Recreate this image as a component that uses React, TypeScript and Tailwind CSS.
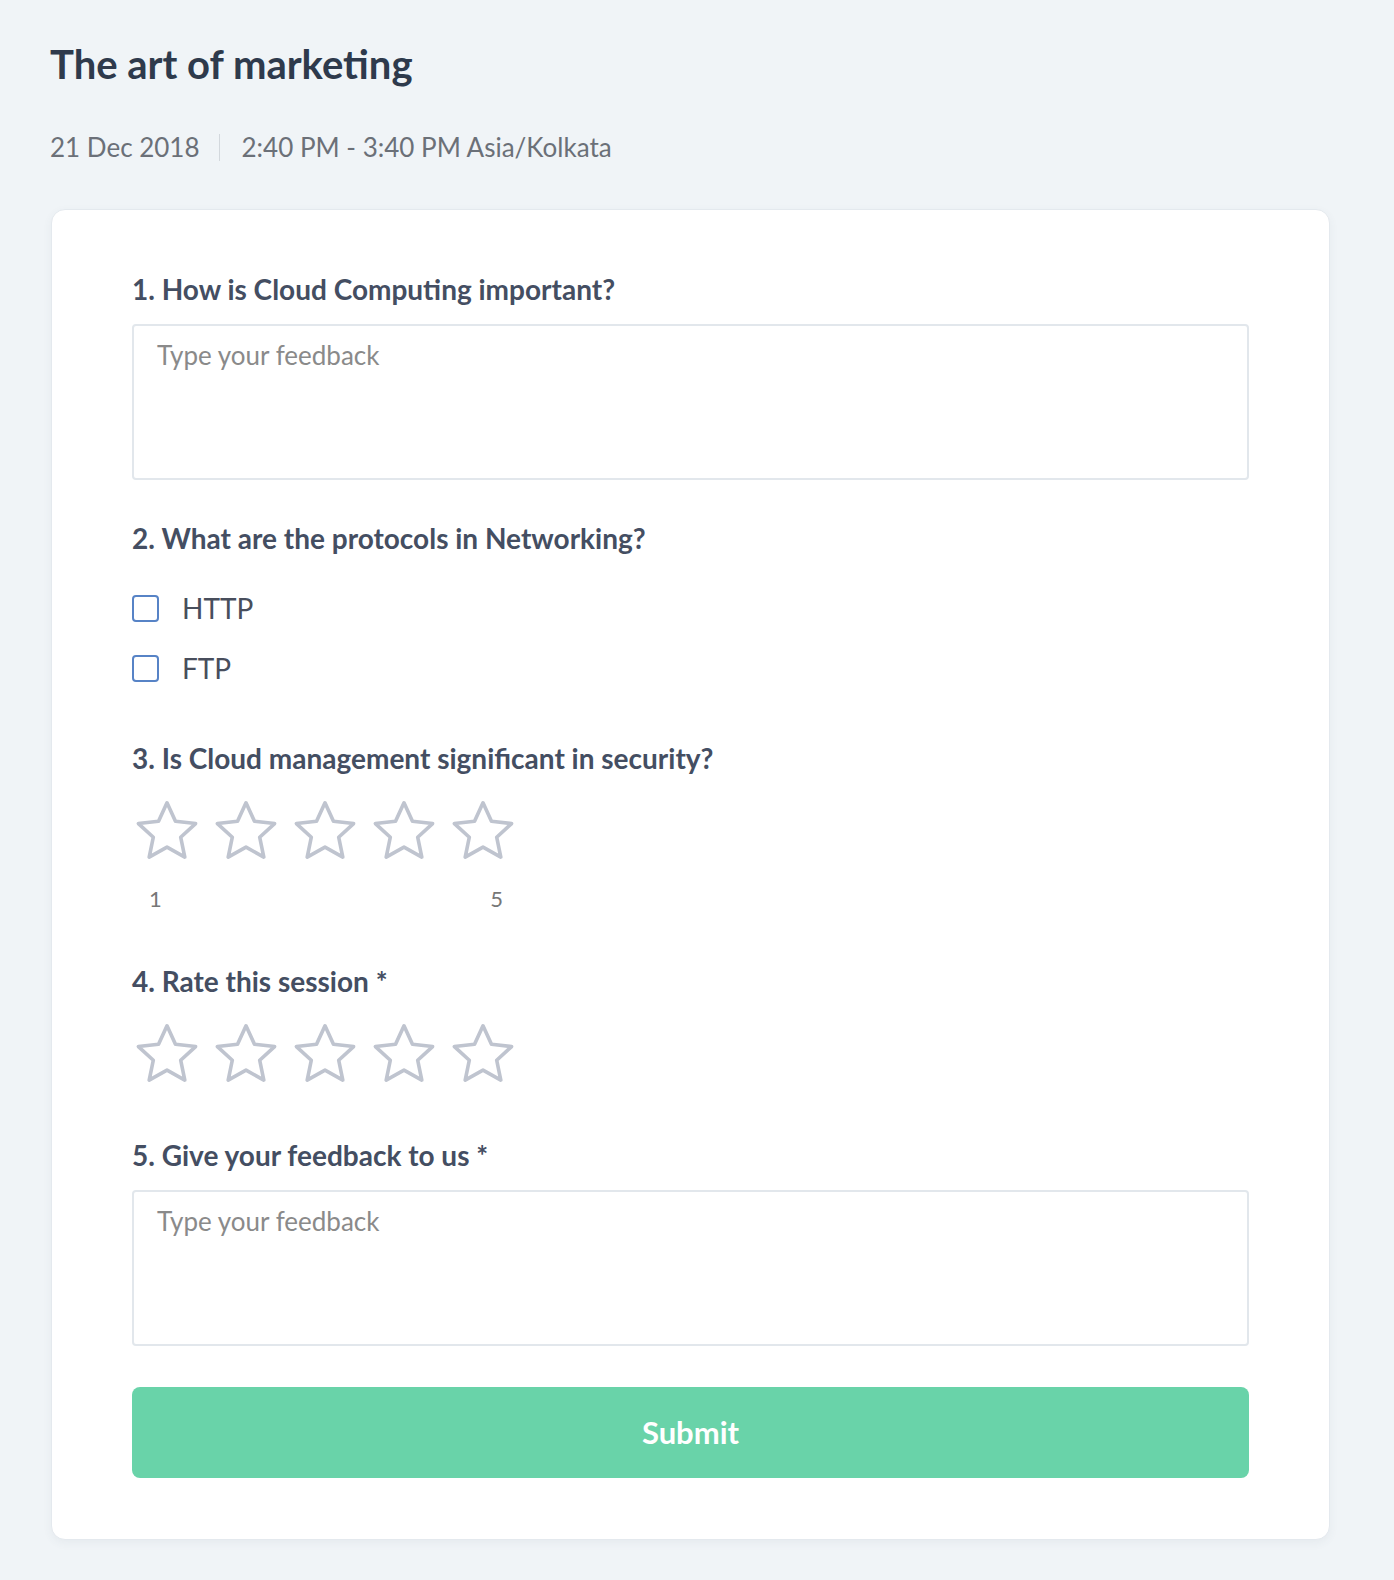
import React from 'react';

const font = { fontFamily: 'Lato, "Open Sans", "Liberation Sans", sans-serif' };

const Star = () => (
  <svg viewBox="0 0 24 24" className="w-[70px] h-[70px]" fill="none">
    <polygon
      points="12,2 14.9,8.3 21.8,9.1 16.7,13.8 18.1,20.6 12,17.2 5.9,20.6 7.3,13.8 2.2,9.1 9.1,8.3"
      stroke="#bfc4cf"
      strokeWidth="1.25"
      strokeLinejoin="round"
    />
  </svg>
);

const Stars = () => (
  <div className="flex gap-[9px]">
    {[1, 2, 3, 4, 5].map(i => (
      <Star key={i} />
    ))}
  </div>
);

const Question: React.FC<{ children: React.ReactNode }> = ({ children }) => (
  <h2 className="text-[28px] leading-[34px] font-bold text-[#444e62]">{children}</h2>
);

const Feedback = () => (
  <textarea
    placeholder="Type your feedback"
    className="block w-full h-[156px] resize-none rounded-[4px] border-2 border-[#e2e7ec] bg-white px-[23px] pt-[14px] text-[26px] leading-[31px] text-[#454f63] placeholder:text-[#8a8a8a] outline-none"
    style={font}
  />
);

const Option: React.FC<{ label: string }> = ({ label }) => (
  <label className="flex items-center gap-[23px] h-[34px]">
    <span className="w-[27px] h-[27px] rounded-[4px] border-2 border-[#5783c6] bg-white" />
    <span className="text-[28px] leading-[34px] text-[#484e5c]">{label}</span>
  </label>
);

export default function App() {
  return (
    <div className="min-h-screen bg-[#f0f4f7] pl-[50px] pt-[40px] pb-[40px]" style={font}>
      <h1 className="text-[40px] leading-[48px] font-bold text-[#2e3a4c]">The art of marketing</h1>
      <div className="mt-[44px] flex items-center text-[26px] leading-[31px] text-[#6b7078]">
        <span>21 Dec 2018</span>
        <span className="ml-[19px] mr-[22px] w-px h-[27px] bg-[#d3d8dd]" />
        <span>2:40 PM - 3:40 PM Asia/Kolkata</span>
      </div>

      <div className="mt-[46px] ml-[1px] w-[1279px] rounded-[14px] border border-[#e4e9ee] bg-white px-[80px] pt-[62px] pb-[61px] shadow-[0_3px_10px_rgba(60,80,100,0.06)]">
        <Question>1. How is Cloud Computing important?</Question>
        <div className="mt-[18px]">
          <Feedback />
        </div>

        <div className="mt-[41px]">
          <Question>2. What are the protocols in Networking?</Question>
        </div>
        <div className="mt-[36px] flex flex-col gap-[26px]">
          <Option label="HTTP" />
          <Option label="FTP" />
        </div>

        <div className="mt-[56px]">
          <Question>3. Is Cloud management significant in security?</Question>
        </div>
        <div className="mt-[22px]">
          <Stars />
        </div>
        <div className="mt-[19px] w-[380px] flex justify-between pl-[17px] pr-[9px] text-[22px] leading-[26px] text-[#777777]">
          <span>1</span>
          <span>5</span>
        </div>

        <div className="mt-[52px]">
          <Question>4. Rate this session *</Question>
        </div>
        <div className="mt-[22px]">
          <Stars />
        </div>

        <div className="mt-[48px]">
          <Question>5. Give your feedback to us *</Question>
        </div>
        <div className="mt-[18px]">
          <Feedback />
        </div>

        <button className="mt-[41px] w-full h-[91px] rounded-[8px] bg-[#69d3a9] text-white text-[31px] font-bold">
          Submit
        </button>
      </div>
    </div>
  );
}
